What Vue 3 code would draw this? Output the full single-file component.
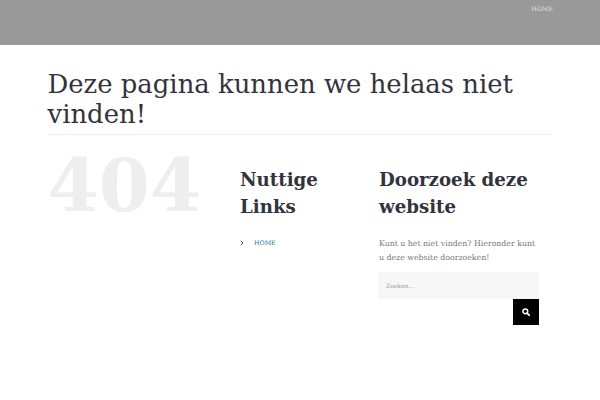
<script setup>
</script>

<template>
  <div class="page">
    <header class="top">
      <a class="nav">HOME</a>
    </header>
    <main class="wrap">
      <h1 class="title">Deze pagina kunnen we helaas niet vinden!</h1>
      <div class="cols">
        <div class="c404">404</div>
        <div class="links">
          <h2>Nuttige Links</h2>
          <div class="li">
            <svg class="chev" width="4" height="6" viewBox="0 0 4 6"><path d="M.8.8 3 3 .8 5.200" fill="none" stroke="#a33" stroke-width="1"/></svg>
            <a>HOME</a>
          </div>
        </div>
        <div class="search">
          <h2>Doorzoek deze website</h2>
          <p>Kunt u het niet vinden? Hieronder kunt u deze website doorzoeken!</p>
          <div class="field">Zoeken...</div>
          <div class="btnrow">
            <button class="btn" aria-label="Zoeken">
              <svg width="8" height="8" viewBox="0 0 12 12"><circle cx="5" cy="5" r="3.6" fill="none" stroke="#fff" stroke-width="2.2"/><path d="M7.6 7.6 11 11" stroke="#fff" stroke-width="2.6" stroke-linecap="round"/></svg>
            </button>
          </div>
        </div>
      </div>
    </main>
  </div>
</template>

<style>
body { margin: 0; background: #fff; }
</style>

<style scoped>
.page { width: 600px; height: 400px; overflow: hidden; font-family: "DejaVu Serif", serif; background: #fff; }
.top { height: 45px; background: #999; display: flex; justify-content: flex-end; padding: 4px 47px 0 0; box-sizing: border-box; }
.nav { font-size: 6px; color: #e4e4e4; line-height: 9px; letter-spacing: .2px; }
.wrap { padding: 24px 48px 0 47.500px; }
.title { margin: 0; font-size: 25.900px; line-height: 30px; font-weight: 400; color: #33333d; padding-bottom: 5px; border-bottom: 1px solid #eee; }
.cols { display: flex; }
.c404 { width: 192.500px; font-size: 73.500px; line-height: 72px; font-weight: 700; color: #eee; margin-top: 14px; }
.links { width: 139px; padding: 31px 30px 0 0; box-sizing: border-box; }
h2 { margin: 0; font-size: 18.200px; line-height: 27px; font-weight: 700; color: #33333d; }
.li { margin-top: 18px; font-size: 6.300px; line-height: 10px; display: flex; align-items: center; gap: 10px; color: #2a6fb0; }
.search { width: 160px; padding-top: 31px; }
.search p { margin: 17px 0 0; font-size: 7.800px; line-height: 14px; color: #777; }
.field { margin: 7px 0 0 -1px; height: 27px; background: #f7f7f7; font-size: 6px; line-height: 27px; color: #999; padding-left: 8px; }
.btnrow { display: flex; justify-content: flex-end; }
.btn { width: 26px; height: 26px; background: #000; border: 0; padding: 0; display: flex; align-items: center; justify-content: center; }
</style>
